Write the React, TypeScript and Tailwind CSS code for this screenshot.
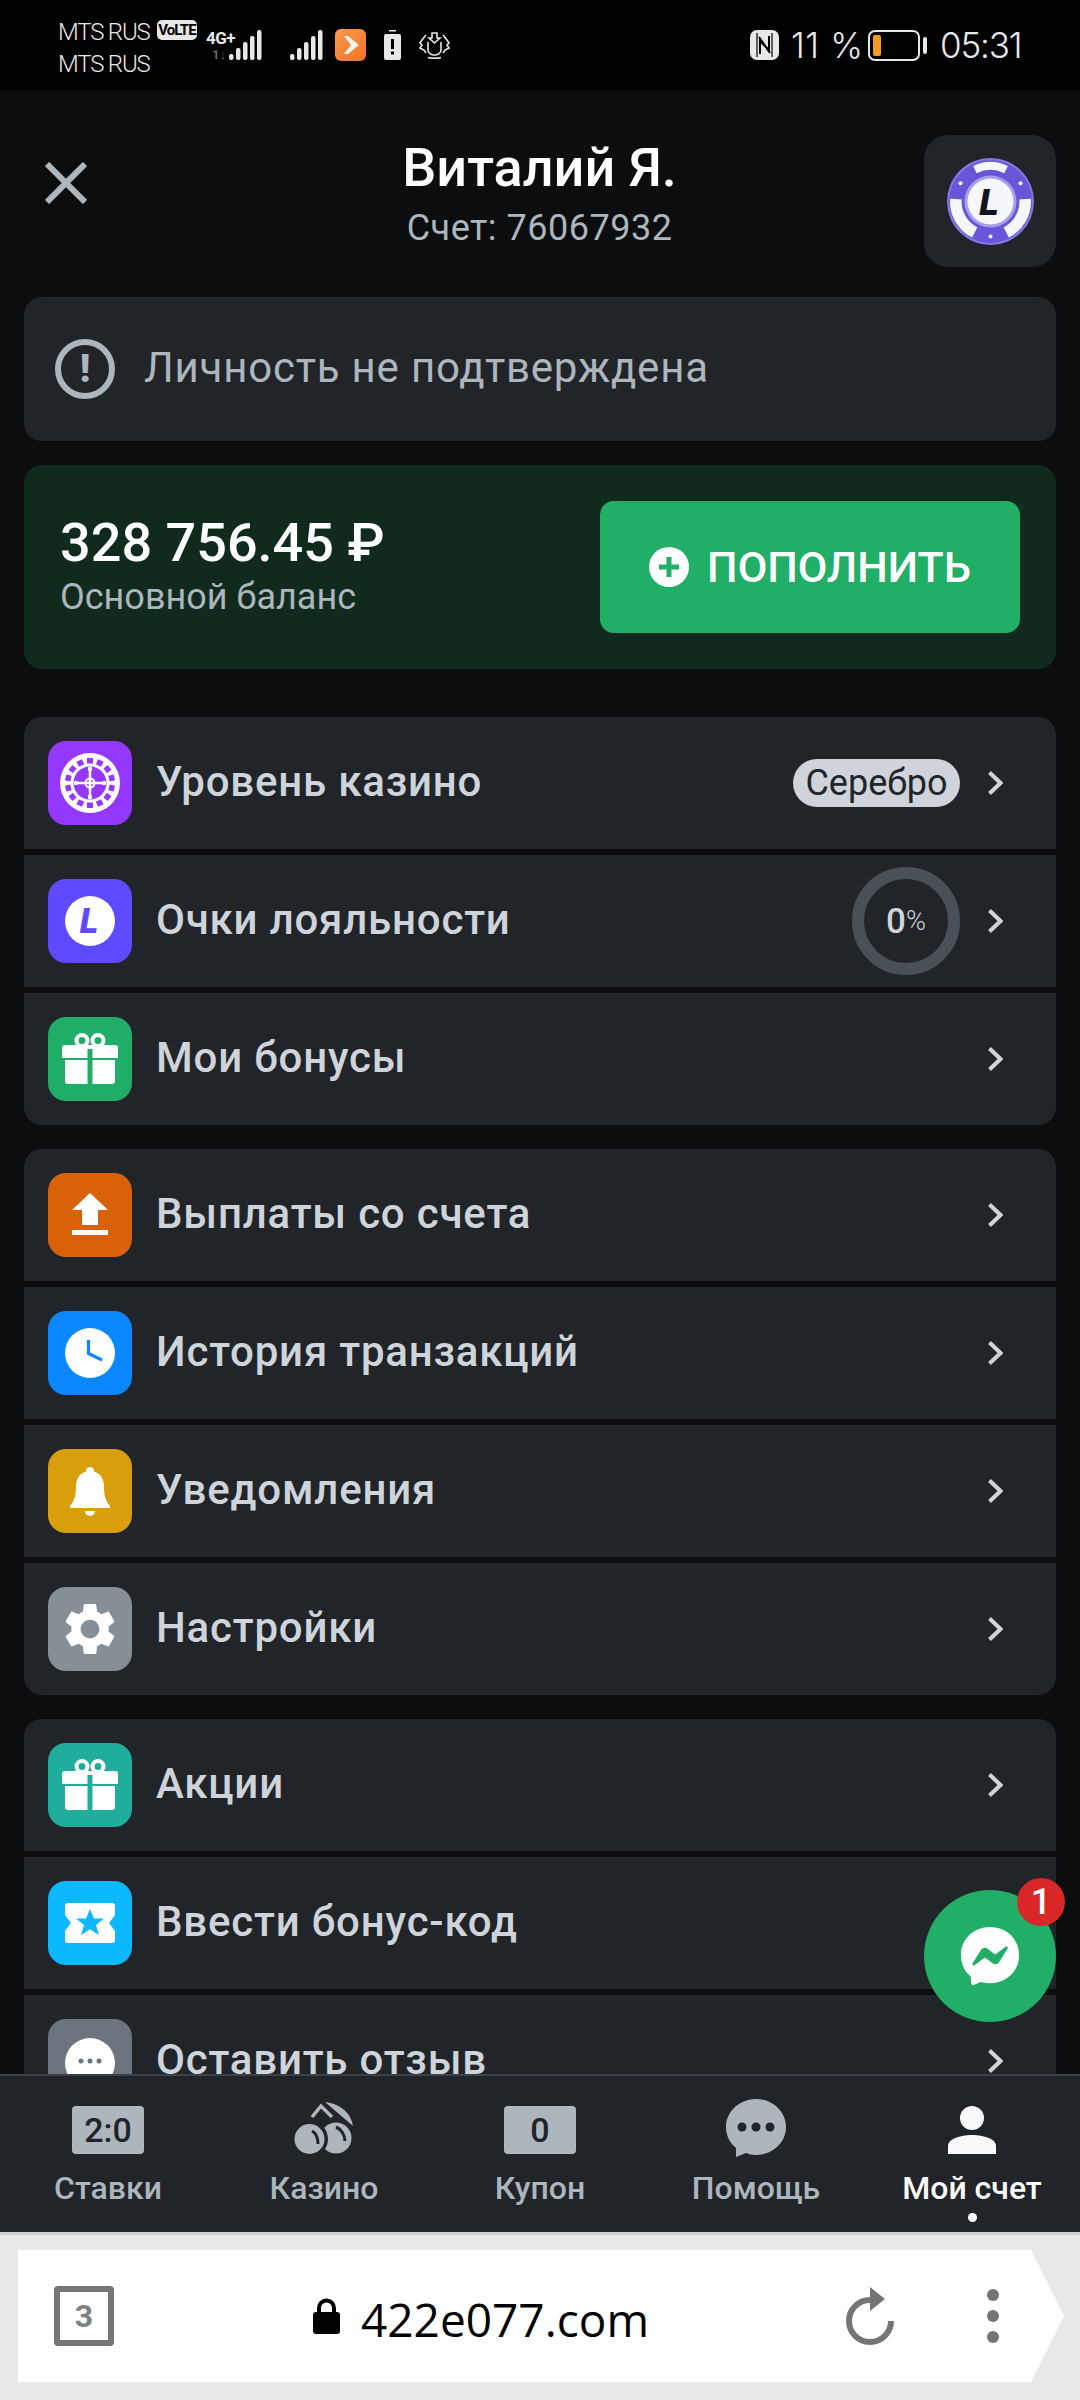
import type { ReactNode } from "react";
import { FaFacebookMessenger } from "react-icons/fa";

const gearPath =
  "M19.14 12.94c.04-.3.06-.61.06-.94 0-.32-.02-.64-.07-.94l2.03-1.58c.18-.14.23-.41.12-.61l-1.92-3.32c-.12-.22-.37-.29-.59-.22l-2.39.96c-.5-.38-1.03-.7-1.62-.94l-.36-2.54c-.04-.24-.24-.41-.48-.41h-3.84c-.24 0-.43.17-.47.41l-.36 2.54c-.59.24-1.13.57-1.62.94l-2.39-.96c-.22-.08-.47 0-.59.22L2.74 8.87c-.12.21-.08.47.12.61l2.03 1.58c-.05.3-.09.63-.09.94s.02.64.07.94l-2.03 1.58c-.18.14-.23.41-.12.61l1.92 3.32c.12.22.37.29.59.22l2.39-.96c.5.38 1.03.7 1.62.94l.36 2.54c.05.24.24.41.48.41h3.84c.24 0 .44-.17.47-.41l.36-2.54c.59-.24 1.13-.56 1.62-.94l2.39.96c.22.08.47 0 .59-.22l1.92-3.32c.12-.22.07-.47-.12-.61l-2.01-1.58zM12 15.6c-1.98 0-3.6-1.62-3.6-3.6s1.62-3.6 3.6-3.6 3.6 1.62 3.6 3.6-1.62 3.6-3.6 3.6z";

function Tile({ color, children }: { color: string; children: ReactNode }) {
  return (
    <div className={`h-[84px] w-[84px] shrink-0 rounded-[18px] ${color}`}>
      <svg viewBox="0 0 84 84" className="h-full w-full" fill="#fff">
        {children}
      </svg>
    </div>
  );
}

function RouletteIcon() {
  const pockets = Array.from({ length: 14 }, (_, i) => (i * 360) / 14);
  return (
    <>
      <circle cx="42" cy="42" r="30" />
      {pockets.map((a) => (
        <rect
          key={a}
          x="39"
          y="17"
          width="6"
          height="5.5"
          fill="#9438ff"
          transform={`rotate(${a} 42 42)`}
        />
      ))}
      <circle cx="42" cy="42" r="16.500" fill="#9438ff" />
      <path d="M42 26v32M26 42h32" stroke="#fff" strokeWidth="2.500" />
      <circle cx="42" cy="28" r="2.200" />
      <circle cx="42" cy="56" r="2.200" />
      <circle cx="28" cy="42" r="2.200" />
      <circle cx="56" cy="42" r="2.200" />
      <circle cx="42" cy="42" r="4.500" fill="none" stroke="#fff" strokeWidth="2" />
    </>
  );
}

function LoyaltyIcon() {
  return (
    <>
      <circle cx="42" cy="42" r="25" />
      <text
        x="41"
        y="54"
        textAnchor="middle"
        fontFamily="Roboto, sans-serif"
        fontWeight="900"
        fontStyle="italic"
        fontSize="35"
        fill="#5f4bff"
      >
        L
      </text>
    </>
  );
}

function GiftIcon({ color }: { color: string }) {
  return (
    <>
      <circle cx="34" cy="23.500" r="5.500" fill="none" stroke="#fff" strokeWidth="4" />
      <circle cx="50" cy="23.500" r="5.500" fill="none" stroke="#fff" strokeWidth="4" />
      <path d="M17 28h50a3 3 0 0 1 3 3v10H14V31a3 3 0 0 1 3-3z" />
      <path d="M17 43h50v21a3 3 0 0 1-3 3H20a3 3 0 0 1-3-3z" />
      <rect x="39.500" y="32" width="5" height="35" fill={color} />
    </>
  );
}

function UploadIcon() {
  return (
    <>
      <path d="M42 20l18 17H50v15H34V37H24z" />
      <rect x="24" y="57" width="36" height="5" />
    </>
  );
}

function ClockIcon() {
  return (
    <>
      <circle cx="42" cy="42" r="25" />
      <path d="M40.500 29v13.500L54 49" fill="none" stroke="#0b87ff" strokeWidth="3.200" />
    </>
  );
}

function BellIcon() {
  return (
    <>
      <path d="M42 18a4 4 0 0 1 4 4.500c7 2 10 8 10 15 0 9 1.500 14 6 19.500v2H22v-2c4.500-5.500 6-10.500 6-19.500 0-7 3-13 10-15a4 4 0 0 1 4-4.500z" />
      <path d="M37 62h10a5 5 0 0 1-10 0z" />
    </>
  );
}

function GearIcon() {
  return <path d={gearPath} transform="translate(10.800 10.800) scale(2.600)" />;
}

function TicketIcon() {
  return (
    <>
      <path d="M20 22h44a3 3 0 0 1 3 3v9l-6 8 6 8v9a3 3 0 0 1-3 3H20a3 3 0 0 1-3-3v-9l6-8-6-8v-9a3 3 0 0 1 3-3z" />
      <path
        d="M42 28l4 9.500h10l-8 6.500 3 10-9-5.800-9 5.800 3-10-8-6.500h10z"
        fill="#0cb8ff"
      />
    </>
  );
}

function ReviewIcon() {
  return (
    <>
      <ellipse cx="42" cy="44" rx="25" ry="25" />
      <circle cx="33" cy="42" r="2.500" fill="#6c757d" />
      <circle cx="42" cy="42" r="2.500" fill="#6c757d" />
      <circle cx="51" cy="42" r="2.500" fill="#6c757d" />
    </>
  );
}

function Chevron() {
  return (
    <svg viewBox="0 0 15 24" className="h-[24px] w-[15px] shrink-0" fill="none">
      <path d="M1.500 1.500L12.500 12L1.500 22.500" stroke="#ced4da" strokeWidth="4" />
    </svg>
  );
}

function Row({
  icon,
  label,
  trailing,
  first,
  last,
}: {
  icon: ReactNode;
  label: string;
  trailing?: ReactNode;
  first?: boolean;
  last?: boolean;
}) {
  return (
    <div
      className={`flex h-[132px] shrink-0 items-center bg-[#212529] pl-[24px] pr-[53px] ${
        first ? "rounded-t-[18px]" : ""
      } ${last ? "rounded-b-[18px]" : ""}`}
    >
      {icon}
      <span className="ml-[24px] flex-1 pb-[3px] text-[42px] font-medium leading-none tracking-[0.8px] text-[#ced4da]">
        {label}
      </span>
      {trailing}
      <div className="ml-[28px]">
        <Chevron />
      </div>
    </div>
  );
}

function Ring() {
  return (
    <div className="flex h-[108px] w-[108px] items-center justify-center rounded-full border-[12px] border-[#495057] text-[#ced4da]">
      <span className="text-[35px] font-medium leading-none">0</span>
      <span className="text-[27px] font-light leading-none">%</span>
    </div>
  );
}

function Bars() {
  return (
    <svg viewBox="0 0 33 30" className="h-[30px] w-[33px]" fill="#e8e8e8">
      <rect x="0" y="24" width="4.500" height="6" rx="2" />
      <rect x="7" y="18" width="4.500" height="12" rx="2" />
      <rect x="14" y="12" width="4.500" height="18" rx="2" />
      <rect x="21" y="6" width="4.500" height="24" rx="2" />
      <rect x="28" y="0" width="4.500" height="30" rx="2" />
    </svg>
  );
}

function StatusBar() {
  return (
    <div className="flex h-[90px] shrink-0 items-start bg-black pl-[58px] pr-[60px] text-[#e8e8e8]">
      <div className="mt-[16px] flex w-[99px] flex-col text-[24px] font-light leading-[32px] tracking-[-1.200px]">
        <span className="whitespace-nowrap">MTS RUS</span>
        <span className="whitespace-nowrap">MTS RUS</span>
      </div>
      <div className="mt-[20px] flex h-[20px] w-[40px] items-center justify-center overflow-hidden rounded-[5px] bg-[#e8e8e8] text-[15px] font-bold leading-none tracking-[-0.9px] text-black">
        VoLTE
      </div>
      <div className="relative ml-[9px] mt-[30px] h-[30px] w-[56px]">
        <span className="absolute left-0 top-0 text-[17px] font-bold leading-none tracking-[-0.5px]">
          4G+
        </span>
        <span className="absolute left-[6px] top-[18px] text-[13px] font-bold leading-none text-[#666]">
          1↓
        </span>
        <div className="absolute right-0 top-0">
          <Bars />
        </div>
      </div>
      <div className="ml-[28px] mt-[30px]">
        <Bars />
      </div>
      <svg viewBox="0 0 31 32" className="ml-[12px] mt-[29px] h-[32px] w-[31px]">
        <defs>
          <linearGradient id="appOrange" x1="0" y1="0" x2="1" y2="1">
            <stop offset="0" stopColor="#fb9a4c" />
            <stop offset="1" stopColor="#f0722a" />
          </linearGradient>
        </defs>
        <rect width="31" height="32" rx="6" fill="url(#appOrange)" />
        <path d="M9 7h4l11 9-11 9H9l7-9-7-9z" fill="#fff" opacity="0.9" />
      </svg>
      <svg viewBox="0 0 17 30" className="ml-[18px] mt-[30px] h-[30px] w-[17px]" fill="#e8e8e8">
        <rect x="5" y="0" width="7" height="1.500" />
        <rect x="0" y="4" width="17" height="26" rx="2" />
        <rect x="7" y="9" width="3" height="10" fill="#000" />
        <rect x="7" y="21.500" width="3" height="3" fill="#000" />
      </svg>
      <svg
        viewBox="0 0 31 27"
        className="ml-[18px] mt-[32px] h-[27px] w-[31px]"
        fill="none"
        stroke="#e8e8e8"
        strokeWidth="1.600"
      >
        <path d="M13 1h5v5h3l-5.500 5L10 6h3z" />
        <path d="M9 10v8c0 3 3 5 6.500 5S22 21 22 18v-8" />
        <path d="M7 3L3 8l-2 3 2 2-2 3 4 2 2 3M24 3l4 5 2 3-2 2 2 3-4 2-2 3" />
        <path d="M9 25.500c4 1 9 1 13 0" />
      </svg>

      <svg viewBox="0 0 29 30" className="ml-auto mt-[30px] h-[30px] w-[29px]">
        <rect width="29" height="30" rx="7" fill="#e8e8e8" />
        <path d="M7 3v24M22 3v24" stroke="#000" strokeWidth="1.200" />
        <path d="M9 7l11 16M10 24V11l9 9V6" stroke="#000" strokeWidth="2" fill="none" />
      </svg>
      <span className="ml-[12px] mt-[26px] w-[70px] whitespace-nowrap text-[35px] font-light leading-[38px] tracking-[0.6px] [font-family:Inter,sans-serif]">
        11 %
      </span>
      <div className="ml-[7px] mt-[30px] flex items-center">
        <div className="flex h-[31px] w-[52px] items-center rounded-[7px] border-2 border-[#e8e8e8] px-[3px]">
          <div className="h-[21px] w-[8px] rounded-[2px] bg-[#f59a23]" />
        </div>
        <div className="ml-[3px] h-[17px] w-[4px] rounded-[2px] bg-[#e8e8e8]" />
      </div>
      <span className="ml-[13px] mt-[26px] w-[80px] whitespace-nowrap text-[35px] font-light leading-[38px] tracking-[-1.200px] [font-family:Inter,sans-serif]">
        05:31
      </span>
    </div>
  );
}

function ChipLogo() {
  return (
    <svg viewBox="0 0 87 87" className="h-[87px] w-[87px]" fill="none">
      <circle cx="43.500" cy="43.500" r="43.500" fill="#8378e4" />
      <circle cx="43.500" cy="43.500" r="41.500" fill="#6656d8" />
      <path d="M27.900 11.600A35.500 35.500 0 0 1 59.100 11.600" stroke="#f6f7fd" strokeWidth="8" />
      <path d="M9.600 41.100A34 34 0 0 0 28.100 73.800" stroke="#f6f7fd" strokeWidth="13" />
      <path d="M77.400 41.100A34 34 0 0 1 58.900 73.800" stroke="#f6f7fd" strokeWidth="13" />
      <circle cx="13.500" cy="25.200" r="2" fill="#f6f7fd" />
      <circle cx="73.500" cy="25.200" r="2" fill="#f6f7fd" />
      <circle cx="43.500" cy="78.500" r="2" fill="#f6f7fd" />
      <circle cx="43.500" cy="43.500" r="29" fill="#6656d8" />
      <circle cx="43.500" cy="43.500" r="26" fill="#a79fea" />
      <circle cx="43.500" cy="43.500" r="23" fill="#f6f7fd" />
      <text
        x="42"
        y="57"
        textAnchor="middle"
        fontFamily="Roboto, sans-serif"
        fontWeight="900"
        fontStyle="italic"
        fontSize="37"
        fill="#12141c"
      >
        L
      </text>
    </svg>
  );
}

function Header() {
  return (
    <div className="relative flex h-[207px] shrink-0 items-start px-[24px] pt-[45px]">
      <svg viewBox="0 0 42 42" className="ml-[21px] mt-[27px] h-[42px] w-[42px]" fill="none">
        <path d="M2 2l38 38M40 2L2 40" stroke="#adb5bd" strokeWidth="6" />
      </svg>
      <div className="flex flex-1 flex-col items-center pl-[68px] pt-[3px]">
        <span className="text-[54px] font-medium leading-[60px] text-white">Виталий Я.</span>
        <span className="mt-[7px] text-[36px] leading-[46px] tracking-[0.5px] text-[#adb5bd]">
          Счет: 76067932
        </span>
      </div>
      <div className="flex h-[132px] w-[132px] items-center justify-center rounded-[24px] bg-[#212529]">
        <ChipLogo />
      </div>
    </div>
  );
}

function InfoCard() {
  return (
    <div className="mx-[24px] flex h-[144px] shrink-0 items-center rounded-[18px] bg-[#212529] pl-[31px]">
      <div className="flex h-[60px] w-[60px] items-center justify-center rounded-full border-[6px] border-[#adb5bd] text-[38px] font-black leading-none text-[#adb5bd]">
        !
      </div>
      <span className="ml-[29px] pb-[2px] text-[42px] leading-none tracking-[0.8px] text-[#adb5bd]">
        Личность не подтверждена
      </span>
    </div>
  );
}

function BalanceCard() {
  return (
    <div className="mx-[24px] mt-[24px] flex h-[204px] shrink-0 items-center justify-between rounded-[18px] bg-[#102b1e] pl-[36px] pr-[36px]">
      <div className="mb-[4px] flex flex-col">
        <span className="text-[54px] font-medium leading-[62px] text-white">328 756.45 ₽</span>
        <span className="mt-[2px] text-[36px] leading-[42px] text-[#adb5bd]">Основной баланс</span>
      </div>
      <div className="flex h-[132px] w-[420px] items-center justify-center rounded-[14px] bg-[#21ae66]">
        <svg viewBox="0 0 40 40" className="h-[40px] w-[40px]">
          <circle cx="20" cy="20" r="20" fill="#fff" />
          <path d="M20 10v20M10 20h20" stroke="#21ae66" strokeWidth="5" />
        </svg>
        <span className="ml-[18px] text-[43px] font-medium leading-none text-white">ПОПОЛНИТЬ</span>
      </div>
    </div>
  );
}

function Group({ children, className }: { children: ReactNode; className: string }) {
  return <div className={`mx-[24px] flex shrink-0 flex-col gap-[6px] ${className}`}>{children}</div>;
}

function NavItem({
  icon,
  label,
  active,
}: {
  icon: ReactNode;
  label: string;
  active?: boolean;
}) {
  return (
    <div className="relative flex flex-1 flex-col items-center">
      <div className="flex h-[58px] items-end">{icon}</div>
      <span
        className={`mt-[14px] text-[32px] font-medium leading-[40px] ${
          active ? "text-white" : "text-[#adb5bd]"
        }`}
      >
        {label}
      </span>
      {active ? (
        <div className="mt-[5px] h-[9px] w-[9px] rounded-full bg-white" />
      ) : null}
    </div>
  );
}

function ScoreBox({ text }: { text: string }) {
  return (
    <div className="flex h-[48px] w-[72px] items-center justify-center rounded-[4px] bg-[#adb5bd] text-[34px] font-medium leading-none text-[#212529]">
      {text}
    </div>
  );
}

function CasinoIcon() {
  return (
    <svg viewBox="0 0 60 52" className="h-[52px] w-[60px]" fill="#adb5bd">
      <path d="M31 0C47 2 57 11 59 24z" />
      <path d="M18 15l9-11 11 11" fill="none" stroke="#adb5bd" strokeWidth="3.500" />
      <circle cx="42" cy="36" r="15.500" />
      <circle cx="15.500" cy="37" r="18.500" fill="#212529" />
      <circle cx="15.500" cy="37" r="15" />
      <path d="M18 29c4 2 6 7 6 13M42 25c5 2 9 8 9 14" fill="none" stroke="#212529" strokeWidth="3" />
    </svg>
  );
}

function BottomNav() {
  return (
    <div className="flex h-[158px] shrink-0 border-t-2 border-[#3a4149] bg-[#212529] pt-[20px]">
      <NavItem icon={<ScoreBox text="2:0" />} label="Ставки" />
      <NavItem icon={<CasinoIcon />} label="Казино" />
      <NavItem icon={<ScoreBox text="0" />} label="Купон" />
      <NavItem
        icon={
          <svg viewBox="0 0 60 60" className="mb-[-4px] h-[60px] w-[60px]" fill="#adb5bd">
            <path d="M30 1c16 0 30 12 30 28S46 57 30 57c-5 0-7-1-10-2L10 59l0-9C4 45 0 38 0 29 0 13 14 1 30 1z" />
            <circle cx="16" cy="29" r="4.500" fill="#212529" />
            <circle cx="30" cy="29" r="4.500" fill="#212529" />
            <circle cx="44" cy="29" r="4.500" fill="#212529" />
          </svg>
        }
        label="Помощь"
      />
      <NavItem
        icon={
          <svg viewBox="0 0 48 48" className="h-[48px] w-[48px]" fill="#f8f9fa">
            <circle cx="24" cy="12" r="12" />
            <path d="M0 48V40c0-7 12-11 24-11s24 4 24 11v8z" />
          </svg>
        }
        label="Мой счет"
        active
      />
    </div>
  );
}

function BrowserBar() {
  return (
    <div className="flex h-[168px] shrink-0 items-start border-t-[3px] border-[#d0d0d0] bg-[#e8e8e8] pl-[18px] pt-[15px]">
      <div className="flex h-[132px] w-[1013px] items-center bg-white pl-[36px] pr-[32px]">
        <div className="flex h-[60px] w-[60px] items-center justify-center rounded-[4px] border-[6px] border-[#757575] text-[32px] font-bold leading-none text-[#808080]">
          3
        </div>
        <svg viewBox="0 0 27 36" className="ml-[199px] h-[36px] w-[27px]">
          <path d="M6 16V10a7.500 7.500 0 0 1 15 0v6" fill="none" stroke="#000" strokeWidth="4" />
          <rect y="14" width="27" height="22" rx="3" />
        </svg>
        <span className="ml-[21px] pt-[6px] text-[46px] leading-none text-black [font-family:'Open_Sans',sans-serif]">
          422e077.com
        </span>
        <svg viewBox="0 0 48 58" className="ml-auto h-[58px] w-[48px]" fill="none">
          <path d="M45 34a21 21 0 1 1-21-21" stroke="#757575" strokeWidth="6" />
          <path d="M24 0l15 12-15 12z" fill="#757575" />
        </svg>
        <div className="ml-[93px] flex flex-col gap-[9px]">
          <div className="h-[12px] w-[12px] rounded-full bg-[#757575]" />
          <div className="h-[12px] w-[12px] rounded-full bg-[#757575]" />
          <div className="h-[12px] w-[12px] rounded-full bg-[#757575]" />
        </div>
      </div>
      <div className="h-[132px] w-[33px] bg-white [clip-path:polygon(0_0,100%_50%,0_100%)]" />
    </div>
  );
}

export default function App() {
  return (
    <div className="flex h-[2400px] w-[1080px] flex-col overflow-hidden bg-[#0b0d0f] [font-family:Roboto,sans-serif]">
      <StatusBar />
      <main className="relative flex min-h-0 flex-1 flex-col overflow-hidden">
        <Header />
        <InfoCard />
        <BalanceCard />

        <Group className="mt-[48px]">
          <Row
            first
            icon={
              <Tile color="bg-[#9438ff]">
                <RouletteIcon />
              </Tile>
            }
            label="Уровень казино"
            trailing={
              <div className="flex h-[48px] w-[167px] items-center justify-center rounded-full bg-[#ced4da] text-[36px] leading-none text-[#212529]">
                Серебро
              </div>
            }
          />
          <Row
            icon={
              <Tile color="bg-[#5f4bff]">
                <LoyaltyIcon />
              </Tile>
            }
            label="Очки лояльности"
            trailing={<Ring />}
          />
          <Row
            last
            icon={
              <Tile color="bg-[#20ad67]">
                <GiftIcon color="#20ad67" />
              </Tile>
            }
            label="Мои бонусы"
          />
        </Group>

        <Group className="mt-[24px]">
          <Row
            first
            icon={
              <Tile color="bg-[#d96209]">
                <UploadIcon />
              </Tile>
            }
            label="Выплаты со счета"
          />
          <Row
            icon={
              <Tile color="bg-[#0b87ff]">
                <ClockIcon />
              </Tile>
            }
            label="История транзакций"
          />
          <Row
            icon={
              <Tile color="bg-[#d99e0b]">
                <BellIcon />
              </Tile>
            }
            label="Уведомления"
          />
          <Row
            last
            icon={
              <Tile color="bg-[#868e96]">
                <GearIcon />
              </Tile>
            }
            label="Настройки"
          />
        </Group>

        <Group className="mt-[24px]">
          <Row
            first
            icon={
              <Tile color="bg-[#20ad9c]">
                <GiftIcon color="#20ad9c" />
              </Tile>
            }
            label="Акции"
          />
          <Row
            icon={
              <Tile color="bg-[#0cb8ff]">
                <TicketIcon />
              </Tile>
            }
            label="Ввести бонус-код"
          />
          <Row
            icon={
              <Tile color="bg-[#6c757d]">
                <ReviewIcon />
              </Tile>
            }
            label="Оставить отзыв"
          />
        </Group>

        {/* Chat button floats over the list */}
        <div className="absolute left-[924px] top-[1800px] flex h-[132px] w-[132px] items-center justify-center rounded-full bg-[#21ae66]">
          <FaFacebookMessenger className="text-[60px] text-white" />
          <div className="absolute left-[93px] top-[-12px] flex h-[48px] w-[48px] items-center justify-center rounded-full bg-[#d92727] text-[36px] font-medium leading-none text-white">
            1
          </div>
        </div>
      </main>
      <BottomNav />
      <BrowserBar />
    </div>
  );
}
